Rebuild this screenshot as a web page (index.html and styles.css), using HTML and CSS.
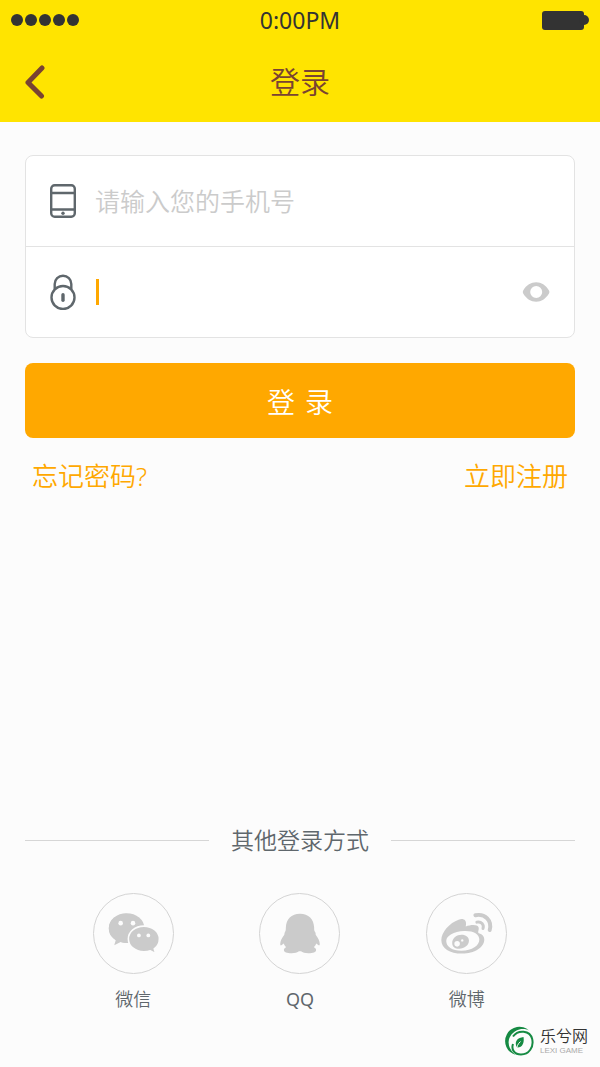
FILE: index.html
```html
<!DOCTYPE html>
<html lang="zh-CN">
<head>
<meta charset="utf-8">
<meta name="viewport" content="width=device-width, initial-scale=1">
<title>登录</title>
<link rel="stylesheet" href="styles.css">
</head>
<body>
<header class="header">
  <div class="status">
    <div class="signal"><i class="dot"></i><i class="dot"></i><i class="dot"></i><i class="dot"></i><i class="dot"></i></div>
    <span class="time">0:00PM</span>
    <svg class="battery" viewBox="0 0 48 20" aria-hidden="true"><rect x="1" y="1" width="42" height="19" rx="3"/><circle cx="43" cy="10" r="5"/></svg>
  </div>
  <nav class="nav">
    <button class="back" type="button" aria-label="返回"><svg viewBox="0 0 20 34" aria-hidden="true"><path d="M17 3 3 17.500 16.500 31"/></svg></button>
    <h1 class="title">登录</h1>
  </nav>
</header>
<main class="main">
  <form class="form">
    <div class="card">
      <div class="row">
        <label class="field-icon" for="phone" aria-label="手机号">
          <svg viewBox="0 0 26 36" aria-hidden="true"><rect x="1.200" y="2.200" width="23.600" height="31.600" rx="3.500"/><path d="M1 10h24M1 26.500h24"/><circle class="solid" cx="13" cy="30.300" r="1.700"/></svg>
        </label>
        <input class="input" id="phone" type="tel" placeholder="请输入您的手机号">
      </div>
      <div class="row">
        <label class="field-icon" for="password" aria-label="密码">
          <svg viewBox="0 0 26 36" aria-hidden="true"><circle cx="13" cy="23.500" r="11.500"/><path d="M4.700 15.500V10a8.300 8.300 0 0 1 16.600 0v5.500"/><path class="keyhole" d="M13 20.800v5.400"/></svg>
        </label>
        <i class="caret"></i>
        <input class="input" id="password" type="password">
        <button class="eye" type="button" aria-label="显示密码"><svg viewBox="0 0 28 20" aria-hidden="true"><path fill-rule="evenodd" d="M1.200 8.500C4.500 3 9 .3 14.200.3S23.500 3 27 8.500q.9 1.500 0 3C23.500 17 19.500 19.700 14.200 19.700S4.500 17 1.200 11.500q-.9-1.500 0-3ZM14.200 4a6 6 0 1 0 0 12 6 6 0 0 0 0-12Z"/></svg></button>
      </div>
    </div>
    <button class="submit" type="submit"><span>登</span><span>录</span></button>
    <div class="links"><a href="#forgot">忘记密码?</a><a href="#register">立即注册</a></div>
  </form>
  <section class="other">
    <h2 class="divider">其他登录方式</h2>
    <div class="providers">
      <a class="provider" href="#wechat">
        <span class="circle"><svg viewBox="0 0 80 80" aria-hidden="true">
          <path d="M33 20c-10 0-18 6.500-18 15 0 5 2.500 9 7 11.800L20.500 52l6.500-3.500c3 .9 5 1.200 8 1z"/>
          <ellipse cx="33" cy="34.500" rx="18" ry="15"/>
          <circle class="hole" cx="27" cy="29.500" r="2.300"/><circle class="hole" cx="39.500" cy="29.500" r="2.300"/>
          <path class="outlined" d="M50.500 32.500c-9 0-15.700 6-15.700 13s6.700 13 15.700 13c2.500 0 4.700-.3 6.500-1l5.500 3-1.500-5c3.300-2.300 5.200-6 5.200-10 0-7-6.700-13-15.700-13Z"/>
          <circle class="hole" cx="45.500" cy="42" r="1.900"/><circle class="hole" cx="55" cy="42" r="1.900"/>
        </svg></span>
        <span>微信</span>
      </a>
      <a class="provider" href="#qq">
        <span class="circle"><svg viewBox="0 0 80 80" aria-hidden="true">
          <path d="M40.500 20c-8.800 0-14 5.700-14.300 13.700-.1 2 .1 3-.8 4.500-.7 1-.5 2-.8 3-2.500 3.500-4.100 6.300-4.100 9.300 0 1.500.5 2 1.500 1.200l2-1.500c.6 1.500 1.300 2.500 2.500 3.800-1.500.7-2.300 1.500-2.300 2.700 0 2.400 3 3.300 7.800 3.300 3.500 0 5.900-.7 7.500-2h2c1.600 1.300 4 2 7.500 2 4.800 0 7.800-.9 7.800-3.300 0-1.200-.8-2-2.300-2.700 1.200-1.300 1.900-2.300 2.500-3.800l2 1.500c1 .8 1.500.3 1.500-1.200 0-3-1.600-5.800-4.100-9.300 0-1 .1-2-.8-3-.9-1.500-.7-2.500-.8-4.500C54.500 25.700 49.300 20 40.500 20Z"/>
        </svg></span>
        <span class="latin">QQ</span>
      </a>
      <a class="provider" href="#weibo">
        <span class="circle"><svg viewBox="0 0 80 80" aria-hidden="true">
          <path fill-rule="evenodd" d="M14.500 46.500c0-8 8.500-17.500 17.500-20.500 5-1.700 8 .5 7.500 5-.1 1.200-.3 1.500-.2 2 5-2 12-2.300 13 1 .5 2-.8 3.500-.3 5.500 3.500 1 6 3 6 6.500 0 8-10 14.300-22.500 14.300S14.500 55 14.500 46.500Zm5 1.200c0 5.800 6 9.800 15.300 9.800 11 0 18.200-5.300 18.200-11.300 0-5.700-6.500-9.200-15.500-8.700-10.500.5-18 4.700-18 10.200Z"/>
          <path fill-rule="evenodd" d="M25.500 49.500c0-4.800 4.500-8.300 9.500-8.300 4.500 0 7.500 2.500 7.500 6 0 4.700-4.500 8.300-10 8.300-4.300 0-7-2.500-7-6Zm2.200 1a2.800 2.800 0 1 0 5.600 0 2.800 2.800 0 0 0-5.600 0Zm6.800-3.500a1.200 1.200 0 1 0 2.400 0 1.200 1.200 0 0 0-2.400 0Z"/>
          <path class="wave-outer" d="M49 21.500C59 19.500 66 27 63.500 36.500"/>
          <path class="wave-inner" d="M50.500 28.500c4.500-1 7.500 2.500 6.200 6.500"/>
        </svg></span>
        <span>微博</span>
      </a>
    </div>
  </section>
</main>
<aside class="brand">
  <svg class="leaf" viewBox="0 0 30 30" aria-hidden="true">
    <path d="M25 4.500A14.300 14.300 0 1 0 12 29C5 24 2.500 16 6.500 10 11 3 19 1.500 25 4.500Z"/>
    <path class="ring" d="M9 10.500C14 3.500 26 4 28.200 13c1.800 8-3.200 15.500-11.200 15.500-6.500 0-10-5-8-10.500"/>
    <path d="M19.500 11c-6 1-8.500 3.700-7.500 8.200.3 1.300.7 1.800 1.500 2.300C18.500 21.500 20.500 16.500 19.500 11Z"/>
    <path class="stem" d="M16.500 15.500c-2.700 2.500-4 5-3.500 8"/>
  </svg>
  <span class="brand-text"><span class="brand-name">乐兮网</span><span class="brand-sub">LEXI GAME</span></span>
</aside>
</body>
</html>
```
FILE: styles.css
```css
* { box-sizing: border-box; }
body {
  margin: 0;
  min-height: 100vh;
  position: relative;
  display: flex;
  flex-direction: column;
  background: #fcfcfc;
  color: #5f676c;
  font-family: "Noto Sans", "Noto Sans CJK SC", sans-serif;
  font-weight: 350;
}
button, input { margin: 0; padding: 0; border: 0; background: none; font: inherit; color: inherit; }
button { cursor: pointer; }
a { color: inherit; text-decoration: none; }
svg { display: block; }

.header { background: #ffe400; }
.status {
  height: 40px;
  padding: 0 11px;
  display: grid;
  grid-template-columns: 1fr auto 1fr;
  align-items: center;
  color: #333;
}
.signal { display: flex; gap: 2px; }
.dot { width: 12px; height: 12px; border-radius: 50%; background: #333; }
.time { font-size: 23px; line-height: 40px; font-weight: 400; }
.battery { width: 48px; height: 20px; fill: #333; justify-self: end; }
.nav {
  height: 82px;
  padding: 2px 25px 0;
  display: grid;
  grid-template-columns: 1fr auto 1fr;
  align-items: center;
  color: #794332;
}
.back { justify-self: start; }
.back svg { width: 20px; height: 34px; fill: none; stroke: #794332; stroke-width: 5; stroke-linecap: round; stroke-linejoin: round; }
.title { margin: 0; font-size: 30px; line-height: 40px; font-weight: 350; }

.main { flex: 1; display: flex; flex-direction: column; padding: 33px 25px 54px; }
.card { border: 1px solid #e3e3e3; border-radius: 8px; background: #fff; }
.row { height: 90px; display: flex; align-items: center; padding: 0 24px; }
.row + .row { height: 91px; border-top: 1px solid #e3e3e3; }
.field-icon { margin-right: 19px; }
.field-icon svg { width: 26px; height: 36px; fill: none; stroke: #5f676c; stroke-width: 2.4; }
.field-icon .solid { fill: #5f676c; stroke: none; }
.field-icon .keyhole { stroke-width: 3.4; stroke-linecap: round; }
.input { flex: 1; min-width: 0; height: 50px; font-size: 25px; outline: 0; caret-color: #ffa800; }
.input::placeholder { color: #cbcbcb; opacity: 1; }
.caret { width: 3px; height: 26px; margin-left: 1px; background: #ffa800; }
.eye svg { width: 28px; height: 20px; fill: #cbcbcb; }
.submit {
  width: 100%;
  height: 75px;
  margin-top: 25px;
  display: flex;
  align-items: center;
  justify-content: center;
  gap: 10px;
  border-radius: 8px;
  background: #ffa800;
  color: #fff;
  font-size: 28px;
}
.links { display: flex; justify-content: space-between; padding: 0 7px; margin-top: 18px; color: #ffa800; font-size: 26px; line-height: 40px; }

.other { margin-top: auto; }
.divider { margin: 0; display: flex; align-items: center; gap: 22px; font-size: 23px; line-height: 34px; font-weight: 350; }
.divider::before, .divider::after { content: ""; flex: 1; height: 1px; background: #d6d6d6; }
.providers { display: grid; grid-template-columns: repeat(3, 1fr); padding: 0 25px; margin-top: 36px; }
.provider { display: flex; flex-direction: column; align-items: center; gap: 11px; font-size: 18px; line-height: 28px; }
.latin { font-weight: 400; }
.circle { width: 81px; height: 81px; border: 1px solid #d4d4d4; border-radius: 50%; }
.circle svg { width: 100%; fill: #cbcbcb; }
.circle .hole { fill: #fcfcfc; }
.circle .outlined { stroke: #fcfcfc; stroke-width: 1.6; }
.circle .wave-outer, .circle .wave-inner { fill: none; stroke: #cbcbcb; stroke-linecap: round; }
.wave-outer { stroke-width: 4; }
.wave-inner { stroke-width: 3; }

.brand { position: absolute; right: 12px; bottom: 11px; display: flex; align-items: center; gap: 6px; color: #333; }
.leaf { width: 30px; height: 30px; fill: #168a43; }
.leaf .ring { fill: none; stroke: #168a43; stroke-width: 2; }
.leaf .stem { fill: none; stroke: #fcfcfc; stroke-width: 1; }
.brand-text { display: flex; flex-direction: column; }
.brand-name { font-size: 16px; line-height: 20px; }
.brand-sub { color: #aaa; font: 8px/10px "Liberation Sans", sans-serif; }
```
